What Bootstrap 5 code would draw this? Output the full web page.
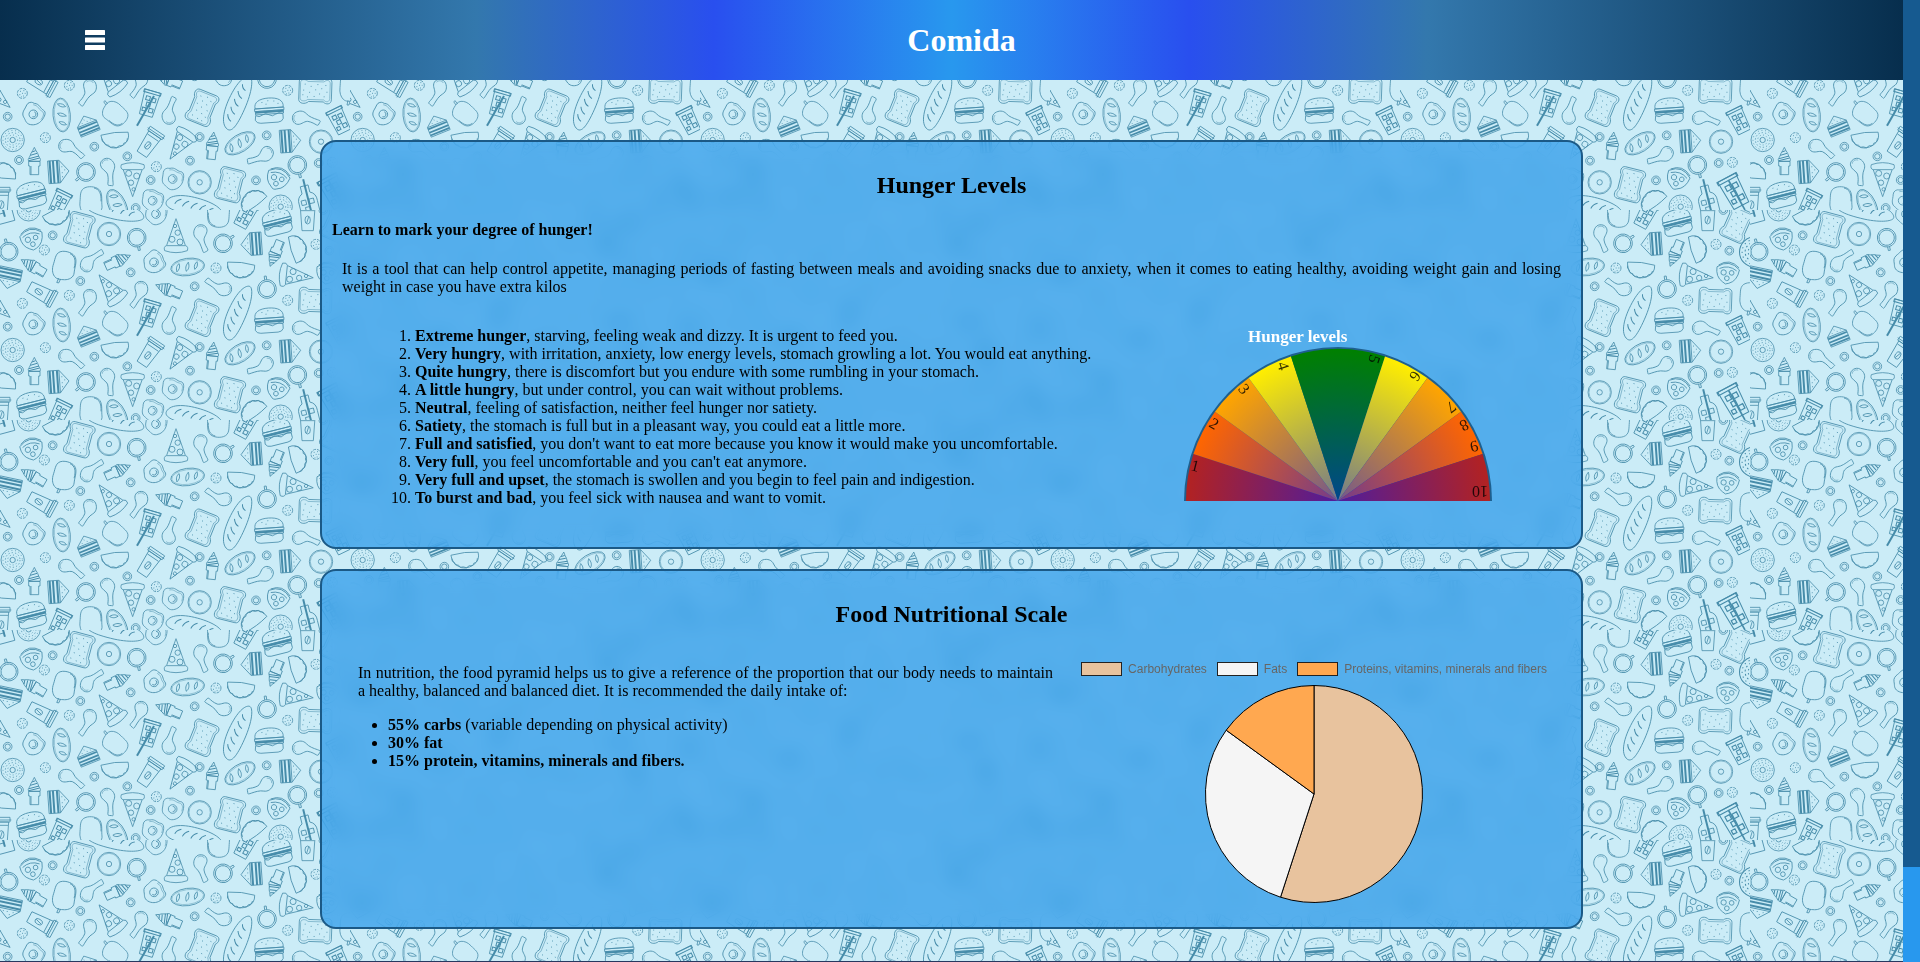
<!DOCTYPE html>
<html lang="en">
<head>
<meta charset="utf-8">
<meta name="viewport" content="width=device-width, initial-scale=1">
<title>Comida</title>
<link href="https://cdn.jsdelivr.net/npm/bootstrap@5.3.0/dist/css/bootstrap.min.css" rel="stylesheet">
<style>
  body { font: 16px/18px "Liberation Serif", "Times New Roman", serif; color: #000; background: #cbecf7; }
  .top-bar { height: 80px; padding: 0 85px;
    background: linear-gradient(90deg, #072e4d 0%, #3378ad 25%, #294fef 37.5%, #2898ee 50%, #294fef 62.5%, #3378ad 75%, #072e4d 100%); }
  .top-bar h1 { font-size: 32px; line-height: 36px; }
  .menu-btn { width: 20px; height: 20px; line-height: 0; }
  .food-backdrop { top: 0; left: 0; z-index: 0; }
  main { padding: 60px 16px 30px; gap: 20px; z-index: 1; }
  .panel { max-width: 1263px; padding: 10px; border: 2px solid #1b5986; border-radius: 16px;
    background: rgba(40, 152, 235, .7); backdrop-filter: blur(10px); }
  .panel h2 { font-size: 24px; line-height: 26px; margin: 20px 0 23px; }
  .panel p { text-align: justify; }
  .lead-in { margin: 0 0 21px; font-weight: 700; }
  .intro { margin: 0 10px 31px; }
  .levels { padding-left: 83px; margin-bottom: 30px; }
  .levels figure { width: 308px; margin-right: 79px; }
  .levels figcaption { font-size: 17px; line-height: 20px; padding-left: 64px; }
  .scale-text { padding: 14px 4px 0 26px; }
  .scale-text ul { padding-left: 30px; }
  .scale-chart { width: 514px; padding: 11px 0 14px; }
  .legend-row { gap: 10px; font: 12px/16px "Liberation Sans", Arial, sans-serif; color: #666; margin-bottom: 8px; }
  .legend-row > span { gap: 6px; }
  .swatch { width: 41px; height: 14px; border: 1px solid #222; }
  .scroll-track { width: 17px; background: #165a90; z-index: 2; }
  .scroll-thumb { height: 95px; background: #2898ee; }
  .foot-line { height: 1px; background: #26385f; z-index: 1; }
  strong { font-weight: 700; }
</style>
</head>
<body>
<div class="d-flex min-vh-100">
  <div class="d-flex flex-column flex-grow-1 position-relative overflow-hidden">

    <svg class="food-backdrop position-absolute w-100 h-100" aria-hidden="true">
      <defs>
        <g id="ring"><circle r="13"/><circle r="8"/></g>
        <g id="cookie"><circle r="15" stroke-dasharray="9 3"/><path d="M-7-6h3M3-8h3M7 0h3M-1 0h3M-9 4h3M2 8h3M-4 10h2"/></g>
        <g id="donut"><circle r="35"/><circle r="32" stroke-width="1.5"/><circle r="8"/></g>
        <g id="sprinkle"><circle r="35"/><circle r="8"/><circle r="15" stroke-dasharray="3 7"/><circle r="22" stroke-dasharray="4 6"/><circle r="29" stroke-dasharray="3 8"/></g>
        <g id="cup"><circle r="28"/><circle r="23"/><path d="M-3 28v11h6V28"/></g>
        <g id="egg"><path d="M-8-32C8-36 12-24 24-22S34-4 30 8 16 30 2 32s-18-8-26-14-8-16-6-24 0-20 8-24 6-2 14-2z"/><path d="M-10-27C6-30 8-20 20-18S30-2 27 7" stroke-width="1.5"/><circle r="13"/><path d="M0-8a8 8 0 0 1 0 16"/></g>
        <g id="leg"><path d="M-6 6C-8-6-22-12-20-26s22-20 32-10 12 24 4 34S6 22 4 34s-2 10-8 8-10-2-8-8 6-14 6-28z"/><path d="M-14-28c4-10 14-10 20-6" stroke-width="1.5"/></g>
        <g id="cone"><path d="M-17 0h34v14h-4v26h-26V14h-4z"/><path d="M-10 14v26"/><path d="M-17 0c-4-8 2-10 4-16s4-12 8-16l5-10 5 10c4 4 6 10 8 16s8 8 4 16z"/><path d="M-16-8 14-16M-12-18l20-6M-7-28l11-4M-16-2l32-8" stroke-width="3"/></g>
        <g id="toast"><path d="M-26-50h52c14 0 16 16 7 24v44c10 10 8 30-6 30h-54c-14 0-16-18-6-28v-44c-8-8-6-26 7-26z"/><path d="M-22-45h44c10 0 14 10 5 18v48c8 8 6 23-4 23h-46c-10 0-12-14-4-22v-48c-8-8-6-19 5-19z" stroke-width="1.5"/><path d="M-18-32h3M2-36h3M16-28h3M-8-20h3M8-14h3M-20-8h3M-4-2h3M16 2h3M-14 12h3M4 16h3M18 22h3M-20 30h3M-2 34h3M12 36h3"/></g>
        <g id="loaf"><ellipse rx="51" ry="26"/><ellipse rx="48" ry="22" stroke-width="1.2"/><path d="M-34 10c-2-14 4-20 10-24 2 12-2 18-10 24zM-6 12c-2-14 4-20 10-26 2 14-2 22-10 26zM20 10c-2-12 4-18 10-22 2 10-2 18-10 22z"/></g>
        <g id="baguette"><path d="M-86 6C-80-22-30-30 20-26S88-6 86 4 50 28-10 28-88 20-86 6z"/><path d="M-60 6c2-10 8-14 16-18M-36 8c2-10 8-16 16-20M-10 8c2-10 8-16 16-20M16 8c2-10 8-16 16-20M42 8c2-10 8-14 14-16" stroke-width="3"/></g>
        <g id="pizza"><path d="M-34-46q34-12 68 0q4 12-5 15h-58q-9-3-5-15z"/><path d="M-28-30 0 50 28-30"/><circle cx="-12" cy="-20" r="9"/><circle cx="12" cy="-12" r="9"/><circle cx="-5" cy="8" r="8"/><circle cx="3" cy="28" r="5"/></g>
        <g id="coffee"><path d="M-26-42h52v14h-52zM-22-28h44l-5 70h-34z"/><path d="M-30-34h60M-20-18h40"/><ellipse rx="8" ry="12" cy="10"/><path d="M3 0-3 20"/></g>
        <g id="taco"><path d="M-42-16q42-8 82-2 4 24-16 36-28 16-48 0-16-10-18-34z"/><path d="M-40-6q-2 10 6 12 0 10 12 10 4 10 14 6 10 8 18-2 12 4 14-6 12-2 12-14"/></g>
        <g id="burger"><path d="M-42-8c-4-20 14-30 42-30s46 10 42 30z"/><path d="M-44-8h88v8h-88zM-42 0h84v10h-84z"/><path d="M-42 3h84" stroke-width="6"/><path d="M-42 12q10 8 20 0t20 0 20 0 22 0v14q-4 10-16 10h-52q-12 0-16-10z"/><path d="M-22-26h3M-4-30h3M14-28h3M26-20h3M-10-20h3"/></g>
        <g id="pop"><path d="M-14-42c12-4 34-2 42 10s4 32 6 46-12 24-24 26-24 4-32-4-12-20-10-36-2-36 18-42z"/><path d="M10-40c16 4 22 16 21 40M-8 39l-3 14h6l3-12"/></g>
        <g id="wich"><path d="M-30-34h34v68h-34zM4-34l28 34L4 34"/><path d="M-24-34v68M-14-34v68M-2-34v68" stroke-width="6"/><path d="M10-14h3M18-4h3M10 4h3M10 16h3"/></g>
        <g id="soda"><path d="M-24-38h48l-4 76h-40z"/><path d="M-26-38h52v8h-52zM-14-20h12v12h-12zM4-18h12v12H4zM-8-2h12v12H-8zM-16 16h10v10h-10zM4 14h12v12H4z" stroke-width="3"/></g>
        <g id="bottle"><path d="M-12-56h24v22q18 8 16 30v56h-56v-56q-2-22 16-30z"/><path d="M-20-14h14v14h-14zM4-14h14v14H4zM-12 8H2v14h-14z"/><path d="M2-76v110" stroke-width="6"/></g>
        <g id="jar"><path d="M-34-12q34-30 68 0-2 34-26 44-10 8-20-2-22-12-22-42z"/><path d="M-30-18q30-26 62 0M-26-8q26-16 52 0"/><circle cx="-12" cy="2" r="8"/><circle cx="12" cy="0" r="7"/><circle cx="0" cy="18" r="7"/></g>

        <pattern id="food" width="350" height="210" patternUnits="userSpaceOnUse" viewBox="0 0 1050 630">
          <g fill="none" stroke="#468caa" stroke-width="2.4">
            <use href="#bottle" transform="translate(4 -12)rotate(-15)"/><use href="#sprinkle" x="86" y="-2"/>
            <use href="#taco" transform="translate(172 18)rotate(-22)"/><use href="#toast" transform="translate(238 60)rotate(15)"/>
            <use href="#donut" x="327" y="72"/><use href="#cup" transform="translate(410 83)rotate(-12)"/>
            <use href="#baguette" transform="translate(348 0)rotate(14)"/><use href="#egg" x="468" y="12"/>
            <use href="#jar" transform="translate(95 85)rotate(-12)"/><use href="#ring" x="158" y="76"/><use href="#cookie" x="133" y="120"/>
            <use href="#cup" transform="translate(26 125)rotate(165)"/><use href="#cone" transform="translate(100 170)rotate(-60)"/>
            <use href="#wich" transform="translate(28 204)rotate(102)"/><use href="#pop" transform="translate(192 168)rotate(12)"/>
            <use href="#leg" transform="translate(275 150)rotate(225)"/><use href="#cone" transform="translate(353 153)rotate(66)"/>
            <use href="#ring" x="392" y="187"/><use href="#egg" transform="translate(462 157)rotate(40)"/>
            <use href="#coffee" transform="translate(125 250)rotate(118)"/><use href="#ring" x="241" y="213"/>
            <use href="#cookie" x="208" y="256"/><use href="#cookie" x="67" y="280"/>
            <use href="#leg" transform="translate(262 278)rotate(22)"/><use href="#pizza" transform="translate(328 234)rotate(142)"/>
            <use href="#leg" transform="translate(416 254)rotate(22)"/><use href="#cone" transform="translate(506 240)rotate(-68)"/>
            <use href="#ring" x="23" y="350"/><use href="#egg" transform="translate(100 343)rotate(20)"/>
            <use href="#loaf" transform="translate(185 345)rotate(85)"/><use href="#wich" transform="translate(262 375)rotate(-112)scale(.9)"/>
            <use href="#pop" transform="translate(345 340)rotate(130)scale(.9)"/><use href="#soda" transform="translate(448 310)rotate(16)"/>
            <path d="M462 288 411 377" stroke-width="6"/>
            <use href="#leg" transform="translate(510 332)rotate(190)"/><use href="#sprinkle" x="38" y="420"/><use href="#cookie" x="136" y="413"/>
            <use href="#leg" transform="translate(215 447)rotate(-62)"/><use href="#ring" x="283" y="440"/><use href="#taco" transform="translate(346 418)rotate(-5)"/>
            <use href="#coffee" transform="translate(449 428)rotate(34)"/><use href="#ring" x="57" y="480"/><use href="#cone" x="103" y="484"/>
            <use href="#wich" transform="translate(175 515)rotate(-4)"/><use href="#cup" transform="translate(258 516)rotate(50)"/>
            <use href="#leg" transform="translate(327 515)rotate(-14)"/><use href="#pizza" x="398" y="540"/>
            <use href="#ring" x="382" y="469"/><use href="#cookie" x="469" y="500"/><use href="#ring" x="452" y="540"/>
            <use href="#taco" transform="translate(8 514)rotate(190)"/><use href="#coffee" x="4" y="604"/>
            <use href="#burger" transform="translate(95 585)rotate(-14)"/><use href="#soda" transform="translate(178 610)rotate(26)"/>
            <use href="#pop" x="272" y="604"/><use href="#loaf" transform="translate(352 616)rotate(65)"/>
            <use href="#egg" x="458" y="602"/><use href="#ring" x="407" y="624"/><use href="#pizza" transform="translate(-8 290)rotate(-50)"/>
            <use href="#pizza" transform="translate(528 76)rotate(180)"/><use href="#leg" transform="translate(605 85)rotate(-10)scale(1 -1)rotate(180)"/>
            <use href="#cup" transform="translate(669 100)rotate(-125)"/><use href="#pop" transform="translate(656 8)rotate(180)"/>
            <use href="#soda" transform="translate(737 15)rotate(28)"/><use href="#burger" transform="translate(832 37)rotate(-14)"/>
            <use href="#coffee" x="923" y="20"/><use href="#wich" transform="translate(755 102)rotate(176)"/>
            <use href="#cone" transform="translate(826 130)rotate(202)"/><use href="#taco" transform="translate(893 115)rotate(-105)"/>
            <use href="#cookie" x="948" y="103"/><use href="#loaf" transform="translate(563 171)rotate(-8)"/><use href="#cookie" x="648" y="174"/>
            <use href="#taco" transform="translate(722 178)rotate(8)"/><use href="#ring" x="584" y="229"/>
            <use href="#leg" transform="translate(655 230)rotate(112)"/><use href="#cup" transform="translate(801 237)rotate(172)"/>
            <use href="#pizza" transform="translate(890 198)rotate(-84)"/><use href="#toast" transform="translate(945 272)rotate(92)"/>
            <use href="#cookie" x="863" y="271"/><use href="#toast" transform="translate(606 324)rotate(22)"/>
            <use href="#baguette" transform="translate(712 307)rotate(-66)"/><use href="#burger" transform="translate(808 332)rotate(-4)"/>
            <use href="#leg" transform="translate(918 357)rotate(-80)"/><use href="#pizza" transform="translate(538 436)rotate(34)"/>
            <use href="#ring" x="599" y="411"/><use href="#cone" transform="translate(637 438)rotate(6)"/>
            <use href="#loaf" transform="translate(720 430)rotate(-32)"/><use href="#ring" x="800" y="406"/><use href="#wich" transform="translate(870 423)rotate(-4)"/>
            <use href="#donut" x="963" y="425"/><use href="#ring" x="570" y="482"/><use href="#leg" transform="translate(782 470)rotate(62)"/>
            <use href="#cup" transform="translate(892 495)rotate(-14)"/><use href="#ring" x="956" y="489"/><use href="#egg" x="518" y="537"/>
            <use href="#donut" x="599" y="547"/><use href="#toast" transform="translate(690 555)rotate(14)"/><use href="#ring" x="768" y="541"/>
            <use href="#jar" transform="translate(834 534)rotate(20)"/><use href="#taco" transform="translate(757 600)rotate(145)"/>
            <use href="#sprinkle" x="842" y="620"/><use href="#bottle" transform="translate(926 612)rotate(-14)"/>
            <use href="#baguette" transform="translate(584 620)rotate(14)"/><use href="#toast" transform="translate(1010 44)rotate(24)"/>
            <use href="#ring" x="988" y="122"/><use href="#jar" transform="translate(983 187)rotate(8)"/><use href="#ring" x="970" y="0"/>
            <use href="#soda" transform="translate(1017 362)rotate(-26)"/><use href="#cookie" x="997" y="487"/>
            <use href="#soda" transform="translate(1002 575)rotate(-28)scale(1.25)"/><path d="M985 540l50 90" stroke-width="5"/>
            <use href="#sprinkle" transform="translate(1064 126)scale(1.3)"/><use href="#pop" x="1052" y="262"/>
          </g>
        </pattern>
      </defs>
      <rect width="100%" height="100%" fill="url(#food)"/>
    </svg>

    <header class="top-bar d-flex align-items-center position-relative text-white">
      <button type="button" class="menu-btn btn p-0 border-0 rounded-0" aria-label="Menu">
        <svg width="20" height="20" fill="#fff" aria-hidden="true"><rect width="20" height="5" rx=".5"/><rect y="7.5" width="20" height="5" rx=".5"/><rect y="15" width="20" height="5" rx=".5"/></svg>
      </button>
      <h1 class="flex-grow-1 text-center fw-bold m-0">Comida</h1>
    </header>

    <main class="position-relative flex-grow-1 d-flex flex-column align-items-center">
      <section class="panel w-100">
        <h2 class="text-center fw-bold">Hunger Levels</h2>
        <p class="lead-in">Learn to mark your degree of hunger!</p>
        <p class="intro">It is a tool that can help control appetite, managing periods of fasting between meals and avoiding snacks due to anxiety, when it comes to eating healthy, avoiding weight gain and losing weight in case you have extra kilos</p>
        <div class="levels d-flex justify-content-between">
          <ol class="p-0 m-0">
            <li><strong>Extreme hunger</strong>, starving, feeling weak and dizzy. It is urgent to feed you.</li>
            <li><strong>Very hungry</strong>, with irritation, anxiety, low energy levels, stomach growling a lot. You would eat anything.</li>
            <li><strong>Quite hungry</strong>, there is discomfort but you endure with some rumbling in your stomach.</li>
            <li><strong>A little hungry</strong>, but under control, you can wait without problems.</li>
            <li><strong>Neutral</strong>, feeling of satisfaction, neither feel hunger nor satiety.</li>
            <li><strong>Satiety</strong>, the stomach is full but in a pleasant way, you could eat a little more.</li>
            <li><strong>Full and satisfied</strong>, you don't want to eat more because you know it would make you uncomfortable.</li>
            <li><strong>Very full</strong>, you feel uncomfortable and you can't eat anymore.</li>
            <li><strong>Very full and upset</strong>, the stomach is swollen and you begin to feel pain and indigestion.</li>
            <li><strong>To burst and bad</strong>, you feel sick with nausea and want to vomit.</li>
          </ol>
          <figure class="mb-0 flex-shrink-0">
            <figcaption class="text-white fw-bold">Hunger levels</figcaption>
            <svg class="d-block" width="308" height="154" viewBox="0 0 308 154" role="img" aria-label="Hunger scale from 1 to 10">
              <defs>
                <radialGradient id="core" gradientUnits="userSpaceOnUse" cx="154" cy="154" r="152">
                  <stop offset="0" stop-color="#0018ff" stop-opacity=".55"/><stop offset="1" stop-color="#0018ff" stop-opacity="0"/>
                </radialGradient>
              </defs>
              <path d="M0 154A154 154 0 0 1 308 154z" fill="#1e5f8e"/>
              <g>
                <path d="M154 154H2A152 152 0 0 1 9.4 107z" fill="#b22222"/>
                <path d="M154 154 9.4 107A152 152 0 0 1 31 64.7z" fill="#ff6600"/>
                <path d="M154 154 31 64.7A152 152 0 0 1 64.7 31z" fill="#ffa500"/>
                <path d="M154 154 64.7 31A152 152 0 0 1 107 9.4z" fill="#ffee00"/>
                <path d="M154 154 107 9.4A152 152 0 0 1 201 9.4z" fill="#008000"/>
                <path d="M154 154 201 9.4A152 152 0 0 1 243.3 31z" fill="#ffee00"/>
                <path d="M154 154 243.3 31A152 152 0 0 1 277 64.7z" fill="#ffa500"/>
                <path d="M154 154 277 64.7A152 152 0 0 1 298.6 107z" fill="#ff6600"/>
                <path d="M154 154 298.6 107A152 152 0 0 1 306 154z" fill="#b22222"/>
              </g>
              <path d="M2 154A152 152 0 0 1 306 154z" fill="url(#core)"/>
              <g font-size="16" text-anchor="middle" fill="#000" fill-opacity=".8">
                <text transform="translate(11 119)rotate(14)" y="5">1</text>
                <text transform="translate(30 77)rotate(30)" y="5">2</text>
                <text transform="translate(60 42)rotate(50)" y="5">3</text>
                <text transform="translate(99 19)rotate(72)" y="5">4</text>
                <text transform="translate(190 12)rotate(108)" y="5">5</text>
                <text transform="translate(231 29)rotate(126)" y="5">6</text>
                <text transform="translate(267 60)rotate(144)" y="5">7</text>
                <text transform="translate(280 78)rotate(154)" y="5">8</text>
                <text transform="translate(290 99)rotate(166)" y="5">9</text>
                <text transform="translate(296 144)rotate(180)" y="5">10</text>
              </g>
            </svg>
          </figure>
        </div>
      </section>

      <section class="panel w-100">
        <h2 class="text-center fw-bold">Food Nutritional Scale</h2>
        <div class="d-flex">
          <div class="scale-text flex-grow-1">
            <p class="mb-3">In nutrition, the food pyramid helps us to give a reference of the proportion that our body needs to maintain a healthy, balanced and balanced diet. It is recommended the daily intake of:</p>
            <ul class="m-0">
              <li><strong>55% carbs</strong> (variable depending on physical activity)</li>
              <li><strong>30% fat</strong></li>
              <li><strong>15% protein, vitamins, minerals and fibers.</strong></li>
            </ul>
          </div>
          <div class="scale-chart flex-shrink-0 d-flex flex-column align-items-center">
            <div class="legend-row d-flex text-nowrap">
              <span class="d-flex align-items-center"><i class="swatch" style="background:#e8c39e"></i>Carbohydrates</span>
              <span class="d-flex align-items-center"><i class="swatch" style="background:#f5f5f5"></i>Fats</span>
              <span class="d-flex align-items-center"><i class="swatch" style="background:#ffa850"></i>Proteins, vitamins, minerals and fibers</span>
            </div>
            <svg class="d-block" width="218" height="218" viewBox="-109 -109 218 218" role="img" aria-label="Daily intake pie chart" stroke="#000" stroke-linejoin="round">
              <path d="M0 0V-108.5A108.5 108.5 0 1 1-33.5 103.2z" fill="#e8c39e"/>
              <path d="M0 0-33.5 103.2A108.5 108.5 0 0 1-87.8-63.8z" fill="#f5f5f5"/>
              <path d="M0 0-87.8-63.8A108.5 108.5 0 0 1 0-108.5z" fill="#ffa850"/>
            </svg>
          </div>
        </div>
      </section>
    </main>
    <footer class="foot-line position-relative"></footer>
  </div>
  <div class="scroll-track d-flex flex-column flex-shrink-0" aria-hidden="true"><div class="scroll-thumb mt-auto"></div></div>
</div>
<script src="https://cdn.jsdelivr.net/npm/bootstrap@5.3.0/dist/js/bootstrap.bundle.min.js"></script>
</body>
</html>
